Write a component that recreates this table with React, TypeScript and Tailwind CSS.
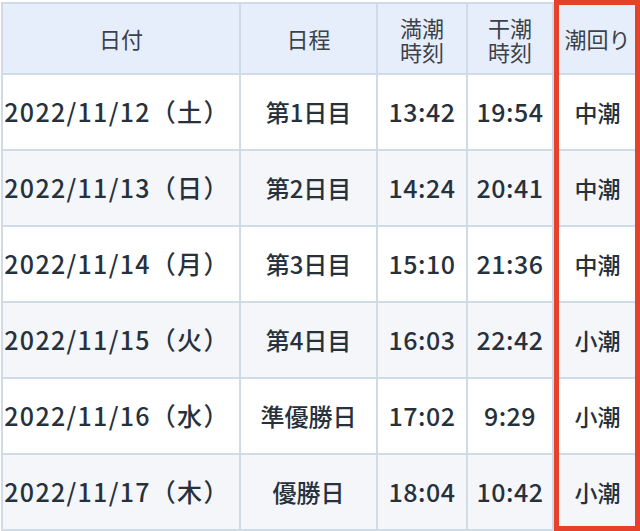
import React from "react";

const rows = [
  ["2022/11/12（土）", "第1日目", "13:42", "19:54", "中潮"],
  ["2022/11/13（日）", "第2日目", "14:24", "20:41", "中潮"],
  ["2022/11/14（月）", "第3日目", "15:10", "21:36", "中潮"],
  ["2022/11/15（火）", "第4日目", "16:03", "22:42", "小潮"],
  ["2022/11/16（水）", "準優勝日", "17:02", "9:29", "小潮"],
  ["2022/11/17（木）", "優勝日", "18:04", "10:42", "小潮"],
];

export default function App() {
  return (
    <div
      className="relative w-[640px] h-[531px] overflow-hidden bg-white"
      style={{ fontFamily: '"Noto Sans CJK JP", "Noto Sans", sans-serif' }}
    >
      <div className="ml-px mt-[2px] w-[638px] bg-[#cfdce7] p-[2px] grid grid-cols-[236px_135px_88px_84px_83px] grid-rows-[69px_repeat(6,74px)] gap-[2px]">
        <div className="bg-[#e7eefb] flex items-center justify-center text-[22px] text-[#3b4249]">日付</div>
        <div className="bg-[#e7eefb] flex items-center justify-center text-[22px] text-[#3b4249]">日程</div>
        <div className="bg-[#e7eefb] flex flex-col items-center justify-center text-[22px] leading-[24px] text-[#3b4249]">
          <span>満潮</span>
          <span>時刻</span>
        </div>
        <div className="bg-[#e7eefb] flex flex-col items-center justify-center text-[22px] leading-[24px] text-[#3b4249]">
          <span>干潮</span>
          <span>時刻</span>
        </div>
        <div className="bg-[#e7eefb] flex items-center justify-center text-[22px] text-[#3b4249] pl-[4px]">潮回り</div>
        {rows.map((r, i) => {
          const bg = i % 2 === 0 ? "bg-white" : "bg-[#f4f6f9]";
          return (
            <React.Fragment key={i}>
              <div className={`${bg} flex items-center justify-center text-[25px] font-medium text-[#26313c] tracking-[1.3px] pr-[8px]`}>{r[0]}</div>
              <div className={`${bg} flex items-center justify-center text-[24px] font-medium text-[#26313c]`}>{r[1]}</div>
              <div className={`${bg} flex items-center justify-center text-[25px] font-medium text-[#26313c] tracking-[0.5px]`}>{r[2]}</div>
              <div className={`${bg} flex items-center justify-center text-[25px] font-medium text-[#26313c] tracking-[0.5px]`}>{r[3]}</div>
              <div className={`${bg} flex items-center justify-center text-[23px] font-medium text-[#26313c] pl-[4px]`}>{r[4]}</div>
            </React.Fragment>
          );
        })}
      </div>
      <div className="absolute left-[554px] top-0 w-[86px] h-[531px] border-[5px] border-[#e5412b]" />
    </div>
  );
}
